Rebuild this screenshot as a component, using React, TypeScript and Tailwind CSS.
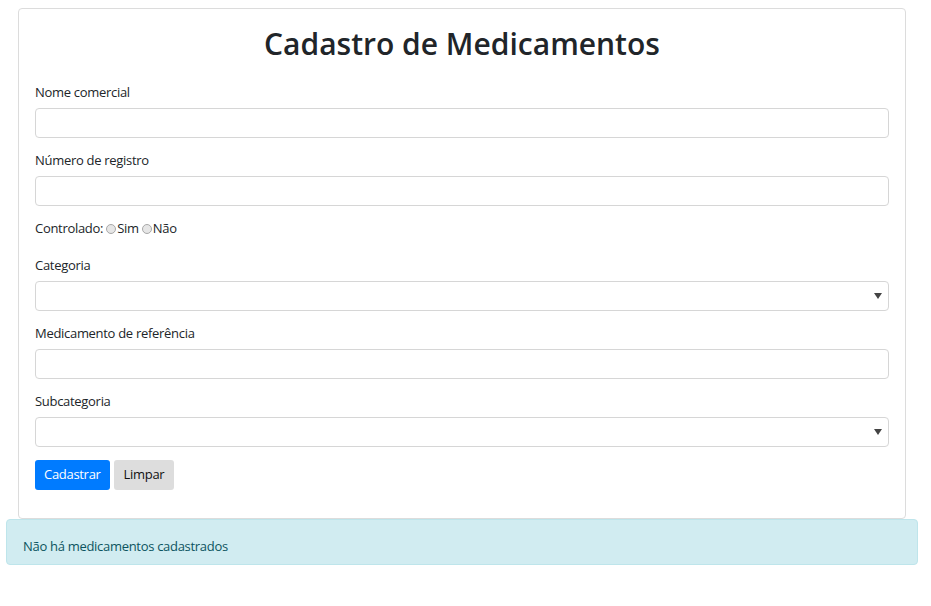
import React from "react";

const Field = ({ label, select }: { label: string; select?: boolean }) => (
  <div className="mb-[12px]">
    <label className="block text-[13px] tracking-[-0.3px] leading-5 mb-[6px] text-[#212529]">{label}</label>
    <div className="relative h-[30px] rounded-[4px] border border-[#d6d6d6] bg-white">
      {select && (
        <span className="absolute right-[6px] top-[11px] w-0 h-0 border-l-[4px] border-r-[4px] border-t-[6px] border-l-transparent border-r-transparent border-t-[#444]" />
      )}
    </div>
  </div>
);

const Radio = () => (
  <span className="inline-block w-[10px] h-[10px] rounded-full border border-[#a8a8a8] bg-[#e6e6e6] mr-[1px] align-[-1px]" />
);

export default function App() {
  return (
    <div className="w-[931px] min-h-[606px] bg-white pt-[8px] font-['Open_Sans','Noto_Sans',sans-serif] text-[#212529]">
      <div className="mx-[18px] w-[888px] border border-[#dcdcdc] rounded-[4px] px-[16px] pt-[16px] pb-[28px]">
        <h1 className="text-center text-[30px] font-semibold leading-[38px] mb-[19px]">Cadastro de Medicamentos</h1>
        <Field label="Nome comercial" />
        <Field label="Número de registro" />
        <div className="text-[13px] tracking-[-0.3px] leading-5 mb-[17px]">
          Controlado: <Radio />Sim <Radio />Não
        </div>
        <Field label="Categoria" select />
        <Field label="Medicamento de referência" />
        <Field label="Subcategoria" select />
        <div className="flex gap-[4px] pt-px">
          <button className="h-[30px] px-[9px] rounded-[3px] bg-[#007bff] text-white text-[13px] tracking-[-0.3px]">Cadastrar</button>
          <button className="h-[30px] px-[10px] rounded-[3px] bg-[#dddddd] text-[#111] text-[13px] tracking-[-0.3px]">Limpar</button>
        </div>
      </div>
      <div className="ml-[6px] w-[912px] rounded-[4px] border border-[#bee5eb] bg-[#d1ecf1] text-[#0c5460] text-[13px] tracking-[-0.3px] leading-5 pl-[16px] pt-[16px] pb-[8px]">
        Não há medicamentos cadastrados
      </div>
    </div>
  );
}
